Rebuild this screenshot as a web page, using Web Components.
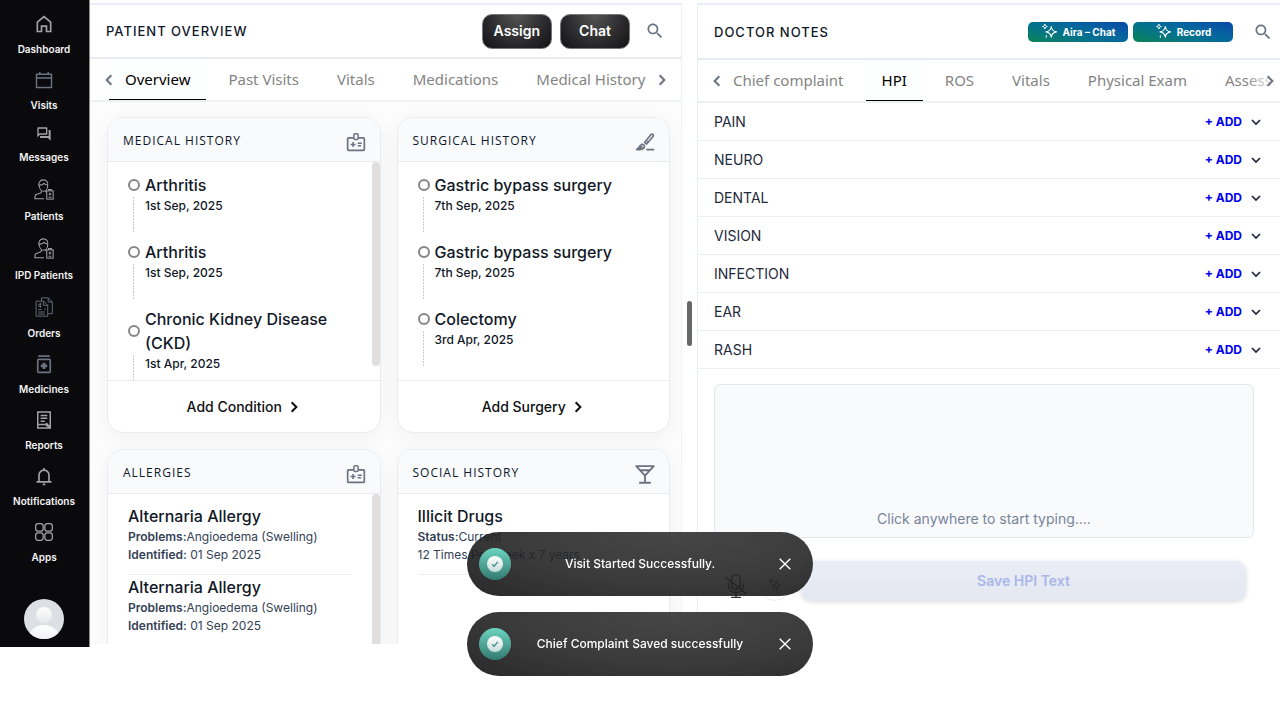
<!DOCTYPE html>
<html lang="en">
<head>
<meta charset="utf-8">
<title>Patient Overview</title>
<style>
body { margin: 0; background: #fff; color: #0f172a; font-family: Inter, "Noto Sans", sans-serif; }
</style>
</head>
<body>
<clinic-app></clinic-app>
<script>
const define = (name, css, html) => {
  const template = document.createElement('template');
  template.innerHTML = `<style>*{box-sizing:border-box}button{font-family:inherit;cursor:pointer;margin:0}${css}</style>${typeof html === 'string' ? html : ''}`;
  customElements.define(name, class extends HTMLElement {
    constructor() {
      super();
      this.attachShadow({ mode: 'open' }).append(template.content.cloneNode(true));
    }
    connectedCallback() {
      if (typeof html === 'function' && !this.ready) {
        this.ready = true;
        this.shadowRoot.innerHTML += html(this);
      }
    }
  });
};

const person = '<g stroke-width="1.1"><path d="M6.5 8.5C5.5 4.5 8 1.5 11 1.5c3.500 0 6 2 5 7"/><path d="M7 6.500c1.500.8 3.500.5 5-1.200 1 1.200 2.500 1.800 4 1.800M7 8c0 3.500 2 6 4.500 6S16 11.500 16 8"/><path d="M9 13.500v2l-5.500 2C2.300 18 2 19 2 22h10M13.500 13.500l1 1.500"/><rect x="15" y="13.500" width="7" height="9"/><path d="M17 13.500v-1.500h3v1.500M17 20.500h3M18.500 15.500v3M17 17h3"/></g>';
const icons = {
  home: '<path d="M4 9.700 12 3l8 6.700V21h-5v-6.500H9V21H4z" stroke-width="2"/>',
  calendar: '<path d="M3 5h18v16H3zM3 9.500h18M7 2.500V5M17 2.500V5" stroke-width="1.700"/>',
  messages: '<path fill="currentColor" stroke="none" d="M15 4v7H5.170L4 12.170V4h11m1-2H3c-.55 0-1 .45-1 1v14l4-4h10c.55 0 1-.45 1-1V3c0-.55-.45-1-1-1zm5 4h-2v9H6v2c0 .55.45 1 1 1h11l4 4V7c0-.55-.45-1-1-1z"/>',
  person,
  orders: '<g stroke-width="1.100"><path d="M9 5V1h8l5 5v14h-5M17 1v5h5"/><path d="M2.500 5h9l5 5v13h-14zM11.500 5v5h5M5 15h4M5 18h8M5 20.500h8M12 14.500h2"/><path d="M9 8.500H7a1.500 1.500 0 0 0 0 3h2M7.500 7v6"/></g>',
  medicine: '<path d="M5 2.500h14" stroke-width="2"/><rect x="4.500" y="6.500" width="15" height="15.500" rx="1" stroke-width="2"/><path d="M12 10.500v7.500M8.200 14.200h7.600" stroke-width="3.200"/>',
  report: '<path d="M4.500 2.500h15v19h-15zM4.500 17.500H14l5 4M8 6.500h8M8 10h8M8 13.500h5M14.500 15.500l5 5.500" stroke-width="1.800"/>',
  bell: '<path d="M3 19h18M6 19v-8a6 6 0 0 1 12 0v8M12 5V2.500M10.500 22h3" stroke-width="2"/>',
  apps: '<g stroke-width="1.500"><rect x="2" y="2" width="9" height="9" rx="3"/><rect x="13" y="2" width="9" height="9" rx="3"/><rect x="2" y="13" width="9" height="9" rx="3"/><rect x="13" y="13" width="9" height="9" rx="3"/></g>',
  search: '<path fill="currentColor" stroke="none" d="M15.500 14h-.79l-.28-.27C15.410 12.590 16 11.110 16 9.500 16 5.910 13.090 3 9.500 3S3 5.910 3 9.500 5.910 16 9.500 16c1.610 0 3.090-.59 4.230-1.570l.27.28v.79l5 4.990L20.490 19l-4.990-5zm-6 0C7.010 14 5 11.990 5 9.500S7.010 5 9.500 5 14 7.010 14 9.500 11.990 14 9.500 14z"/>',
  left: '<path d="M16 4 8 12l8 8" stroke-width="3.500"/>',
  right: '<path d="m8 4 8 8-8 8" stroke-width="3.500"/>',
  down: '<path d="m4 8 8 8 8-8" stroke-width="3.500"/>',
  badge: '<path d="M9.500 7H3a1 1 0 0 0-1 1v13a1 1 0 0 0 1 1h18a1 1 0 0 0 1-1V8a1 1 0 0 0-1-1h-6.500" stroke-width="2"/><rect x="9.500" y="2" width="5" height="7" rx="1.500" stroke-width="1.800"/><path d="M8.500 12v6M5.500 15h6M14 13.500h5M14 16.500h4" stroke-width="1.900"/>',
  scalpel: '<path d="M11.500 12.500 19 3.200a1.700 1.700 0 0 1 2.600 2.200L14 14.500zM2 21c4 .5 8 0 9-2.500 1-2-1-4.500-3-3.500-3 1.500-2.500 4-6 6zM4 20.500l5-3M14 10l2.500 2.200M13.500 21.200H23" stroke-width="2" stroke-linejoin="round"/>',
  glass: '<path d="M1.500 2.500h21L12 14zM12 14v8M5 22.500h14M6 7.500h12" stroke-width="2.200" stroke-linejoin="round"/>',
  sparkles: '<path d="M14.500 5c.7 5 2.500 7 7.500 7.500-5 .7-6.800 2.500-7.500 7.500-.7-5-2.500-6.800-7.500-7.500 5-.5 6.800-2.500 7.500-7.500z" stroke-width="1.500" stroke-linejoin="round"/><path d="M5.500 1.500c.3 2.300 1 3 3.500 3.500-2.500.4-3.200 1.200-3.500 3.500C5.200 6.200 4.500 5.400 2 5c2.500-.5 3.200-1.200 3.500-3.500zM7.500 17v4" stroke-width="1.300"/>',
  mic: '<g stroke-width="1.300"><path d="M8 7V5.500a4 4 0 0 1 8 0V11a4 4 0 0 1-8 0V7M5 9v2c0 4.500 3 7 7 7s7-2.500 7-7V9M12 18v4M7.500 22.500h9M2 3.500l20 16"/></g>',
  close: '<path d="m4 4 16 16M20 4 4 20" stroke-width="2.200"/>',
  check: '<path d="m5 13 4.500 4.500L19 7" stroke-width="3"/>'
};

define('ui-icon', `:host{display:inline-flex;width:20px;height:20px;flex:none}svg{width:100%;height:100%}`,
  el => `<svg viewBox="0 0 24 24" fill="none" stroke="currentColor" aria-hidden="true">${icons[el.getAttribute('name')]}</svg>`);

define('nav-item', `
  :host{display:block}
  a{display:flex;flex-direction:column;align-items:center;gap:8px;padding-bottom:14px;color:#f4f4f5;text-decoration:none;font-size:10px;line-height:14px;font-weight:600;white-space:nowrap}
  ::slotted(ui-icon){color:#a3a3a3}`,
  `<a href="#"><slot name="icon"></slot><slot></slot></a>`);

define('side-bar', `
  :host{display:flex;flex-direction:column;box-sizing:border-box;width:90px;flex:none;background:#0a0a0c;border-right:1px solid #8a8a8a;padding:14px 1px 8px 0}
  nav{display:block}
  .short{height:16px}.tall{height:23px;width:22px}.doc{height:22px}
  .slate{color:#6b7280}
  .avatar{margin:auto auto 0;width:40px;height:40px;padding:0;border:0;border-radius:50%;overflow:hidden;background:#dedfe5;flex:none}
  .avatar svg{display:block}`,
  `<nav aria-label="Main">${[
    ['home', 'Dashboard', ''], ['calendar', 'Visits', 'slate'], ['messages', 'Messages', 'short'],
    ['person', 'Patients', 'tall'], ['person', 'IPD Patients', 'tall'], ['orders', 'Orders', 'doc slate'],
    ['medicine', 'Medicines', 'slate'], ['report', 'Reports', ''], ['bell', 'Notifications', ''], ['apps', 'Apps', '']
  ].map(([i, t, c]) => `<nav-item><ui-icon slot="icon" class="${c}" name="${i}"></ui-icon>${t}</nav-item>`).join('')}</nav>
  <button class="avatar" aria-label="Profile"><svg viewBox="0 0 40 40"><defs><linearGradient id="g" x2="0" y2="1"><stop stop-color="#fff"/><stop offset="1" stop-color="#e6e7ea"/></linearGradient></defs><circle cx="20" cy="16" r="8" fill="url(#g)"/><ellipse cx="20" cy="38" rx="15" ry="12" fill="url(#g)"/></svg></button>`);

define('panel-header', `
  :host{display:flex;align-items:center;box-sizing:border-box;height:56px;flex:none;padding-left:16px;padding-right:var(--header-end,16px);border-top:2px solid #e9eef4;border-bottom:2px solid #e6ebf2}
  h1{margin:0 auto 0 0;font-size:13px;line-height:16px;font-weight:500;letter-spacing:1px;white-space:nowrap}
  .tools{display:flex;align-items:center;gap:var(--tool-gap,8px)}
  .search{border:0;background:none;padding:0;display:flex;color:#6b7280;margin-left:var(--search-gap,16px)}`,
  `<h1><slot></slot></h1><div class="tools"><slot name="tools"></slot></div>
   <button class="search" aria-label="Search"><ui-icon name="search"></ui-icon></button>`);

define('dark-button', `
  :host{display:block}
  button{height:35px;min-width:70px;padding:0 11px;border:1px solid #777;border-radius:10px;color:#fff;font-size:14px;line-height:20px;font-weight:600;background:radial-gradient(ellipse at 50% 0,#555 0,#2d2d2f 55%,#111114 100%) border-box}`,
  `<button><slot></slot></button>`);

define('ai-button', `
  :host{display:block}
  button{display:flex;align-items:center;justify-content:center;gap:5px;width:100px;height:20px;padding:0;border:0;border-radius:5px;color:#fff;font-size:10px;line-height:16px;font-weight:700;background:linear-gradient(15deg,#0b8457 0,#04728c 40%,#0565a0 65%,#0b47a8 100%)}
  ui-icon{width:17px;height:17px}`,
  `<button><ui-icon name="sparkles"></ui-icon><slot></slot></button>`);

define('tab-strip', `
  :host{display:block;position:relative;box-sizing:border-box;height:43px;flex:none;padding:0 var(--strip-end,30px) 0 19px;border-bottom:2px solid #eef1f4}
  .tabs{display:flex;gap:6px;height:100%;overflow:hidden}
  .tab{flex:none;border:0;border-bottom:1px solid transparent;background:none;padding:0 16px;color:#848484;font:400 15px/24px "Noto Sans",sans-serif;white-space:nowrap}
  .tab[aria-selected=true]{color:#000;border-bottom-color:#000;background:#fdfefe}
  .arrow{position:absolute;top:14px;border:0;padding:0;background:none;display:flex;color:#6b7280}
  .arrow ui-icon{width:14px;height:14px}
  .prev{left:12px}.next{right:var(--next-inset,12px)}
  .fade{position:absolute;top:0;bottom:0;right:0;width:var(--fade,36px);background:linear-gradient(90deg,#fff0,#fff 90%);pointer-events:none}`,
  el => `<div class="tabs" role="tablist">${el.getAttribute('labels').split('|').map(t =>
      `<button class="tab" role="tab" aria-selected="${t === el.getAttribute('selected')}">${t}</button>`).join('')}</div>
    <div class="fade"></div>
    <button class="arrow prev" aria-label="Previous tabs"><ui-icon name="left"></ui-icon></button>
    <button class="arrow next" aria-label="Next tabs"><ui-icon name="right"></ui-icon></button>`);

define('record-card', `
  :host{display:flex;flex-direction:column;box-sizing:border-box;height:316px;border:1px solid #e9ebee;border-radius:16px;background:#fff;overflow:hidden;box-shadow:0 6px 22px #0000000b}
  header{display:flex;align-items:center;justify-content:space-between;height:44px;flex:none;padding:0 14px 0 15px;background:#f8fafc;border-bottom:1px solid #e9ebee}
  h2{margin:2px 0 0;font:500 12px/18px "Open Sans",sans-serif;letter-spacing:1px;white-space:nowrap}
  header ui-icon{color:#6b7280;margin-top:4px}
  .body{display:flex;flex:1;min-height:0;overflow:hidden}
  .content{flex:1;min-width:0;padding:11px 20px 0}
  .thumb{width:8px;height:204px;border-radius:4px;background:#e0dfde;flex:none}
  :host([kind=list]) .content{padding-top:10px}
  :host([kind=list]) .thumb{height:100%}
  :host(:not([scroll])) .thumb{visibility:hidden}
  footer{height:52px;flex:none;border-top:1px solid #e9ebee;display:flex}
  footer button{flex:1;display:flex;align-items:center;justify-content:center;gap:5px;border:0;background:none;color:#0f1115;font-size:14px;line-height:20px;font-weight:500}
  footer ui-icon{width:14px;height:14px}`,
  el => `<header><h2>${el.getAttribute('heading')}</h2><ui-icon name="${el.getAttribute('icon')}"></ui-icon></header>
    <div class="body"><div class="content"><slot></slot></div><div class="thumb"></div></div>
    ${el.hasAttribute('action') ? `<footer><button>${el.getAttribute('action')} <ui-icon name="right"></ui-icon></button></footer>` : ''}`);

define('timeline-entry', `
  :host{display:grid;grid-template-columns:12px 1fr;column-gap:5px;grid-template-rows:auto 43px;color:#111827}
  .dot{align-self:center;width:12px;height:12px;border:2px solid #868686;border-radius:50%}
  h3{margin:0;font-size:16px;line-height:24px;font-weight:500}
  .line{width:7px;height:35px;border-right:0;background:repeating-linear-gradient(#ccc 0 2px,#fff 2px 3px) 5px 0/1px 100% no-repeat}
  time{font-size:12px;line-height:18px;font-weight:500}`,
  el => `<span class="dot"></span><h3><slot></slot></h3><span class="line"></span><time>${el.getAttribute('date')}</time>`);

define('detail-entry', `
  :host{display:block;padding-bottom:10px;border-bottom:1px solid #eeeff1;color:#334155;font-size:12px;line-height:18px}
  h3{margin:0;color:#111827;font-size:16px;line-height:24px;font-weight:500}`,
  el => `<h3>${el.getAttribute('heading')}</h3><slot></slot>`);

define('symptom-row', `
  :host{display:flex;align-items:center;box-sizing:border-box;height:38px;flex:none;padding:0 17px 0 16px;border-bottom:1px solid #eaeef3;color:#1e293b;font-size:14px;line-height:20px}
  span{margin-right:auto}
  button{border:0;background:none;padding:0}
  .add{color:#00e;font-size:12px;line-height:18px;font-weight:700}
  .more{display:flex;color:#1e293b;margin-left:7px}
  .more ui-icon{width:12px;height:12px;margin:0 1px}`,
  `<span><slot></slot></span><button class="add">+ ADD</button><button class="more" aria-label="Expand"><ui-icon name="down"></ui-icon></button>`);

define('patient-overview', `
  :host{display:flex;flex-direction:column;min-width:0;min-height:0;border-right:1px solid #eef1f5;margin:3px 0;--header-end:16px;--search-gap:15px}
  .cards{flex:1;min-height:0;overflow:hidden;display:grid;grid-template-columns:1fr 1fr;gap:16px;align-content:start;padding:15px 11px 0 17px;background:#fcfcfc}
  b{font-weight:600}`,
  `<panel-header>PATIENT OVERVIEW<dark-button slot="tools">Assign</dark-button><dark-button slot="tools">Chat</dark-button></panel-header>
  <tab-strip labels="Overview|Past Visits|Vitals|Medications|Medical History" selected="Overview"></tab-strip>
  <div class="cards">
    <record-card heading="MEDICAL HISTORY" icon="badge" action="Add Condition" scroll>
      <timeline-entry date="1st Sep, 2025">Arthritis</timeline-entry>
      <timeline-entry date="1st Sep, 2025">Arthritis</timeline-entry>
      <timeline-entry date="1st Apr, 2025">Chronic Kidney Disease (CKD)</timeline-entry>
    </record-card>
    <record-card heading="SURGICAL HISTORY" icon="scalpel" action="Add Surgery">
      <timeline-entry date="7th Sep, 2025">Gastric bypass surgery</timeline-entry>
      <timeline-entry date="7th Sep, 2025">Gastric bypass surgery</timeline-entry>
      <timeline-entry date="3rd Apr, 2025">Colectomy</timeline-entry>
    </record-card>
    <record-card heading="ALLERGIES" icon="badge" kind="list" scroll>
      <detail-entry heading="Alternaria Allergy"><b>Problems:</b>Angioedema (Swelling)<br><b>Identified:</b> 01 Sep 2025</detail-entry>
      <detail-entry heading="Alternaria Allergy"><b>Problems:</b>Angioedema (Swelling)<br><b>Identified:</b> 01 Sep 2025</detail-entry>
    </record-card>
    <record-card heading="SOCIAL HISTORY" icon="glass" kind="list">
      <detail-entry heading="Illicit Drugs"><b>Status:</b>Current<br>12 Times Per Week x 7 years</detail-entry>
    </record-card>
  </div>`);

define('doctor-notes', `
  :host{display:flex;flex-direction:column;min-width:0;min-height:0;margin:3px 0 0;border-left:1px solid #e9eef4;--tool-gap:5px;--search-gap:20px;--header-end:7px;--strip-end:0px;--next-inset:3px;--fade:34px}
  panel-header{height:57px}
  form{padding:15px 26px 0 16px}
  textarea{display:block;width:100%;height:154px;padding:124px 16px 8px;border:1px solid #e2e8f0;border-radius:6px;background:#f8fafc;font:400 14px/20px Inter,sans-serif;text-align:center;resize:none;overflow:hidden}
  textarea::placeholder{color:#78849a;opacity:1}
  .actions{display:flex;align-items:end;gap:10px;padding:23px 8px 0 9px}
  .actions button{border:0;background:none;padding:0;color:#333}
  .actions .mic{width:26px;height:30px;display:flex}
  .mic ui-icon{width:26px;height:30px}
  .actions .ai{width:32px;height:32px;border:1px solid #eee;border-radius:50%;display:flex;align-items:center;justify-content:center;background:#fff}
  .ai ui-icon{width:14px;height:14px}
  .actions .save{flex:1;height:40px;border-radius:10px;background:linear-gradient(#eaedf6,#e4e8f1);color:#a8b8ea;font-size:14px;line-height:20px;font-weight:600;box-shadow:0 1px 4px #00000026}`,
  `<panel-header>DOCTOR NOTES<ai-button slot="tools">Aira – Chat</ai-button><ai-button slot="tools">Record</ai-button></panel-header>
  <tab-strip labels="Chief complaint|HPI|ROS|Vitals|Physical Exam|Assessment" selected="HPI"></tab-strip>
  ${['PAIN', 'NEURO', 'DENTAL', 'VISION', 'INFECTION', 'EAR', 'RASH'].map(t => `<symptom-row>${t}</symptom-row>`).join('')}
  <form>
    <textarea aria-label="HPI text" placeholder="Click anywhere to start typing...."></textarea>
    <div class="actions">
      <button type="button" class="mic" aria-label="Microphone off"><ui-icon name="mic"></ui-icon></button>
      <button type="button" class="ai" aria-label="Enhance text"><ui-icon name="sparkles"></ui-icon></button>
      <button type="button" class="save" disabled>Save HPI Text</button>
    </div>
  </form>`);

define('toast-message', `
  :host{display:grid;grid-template-columns:32px 1fr 32px;align-items:center;box-sizing:border-box;width:346px;max-width:100%;height:64px;padding:0 12px;border-radius:32px;color:#fff;font-size:12px;line-height:18px;font-weight:500;text-align:center;background:radial-gradient(ellipse at 60% 0,#2f2f2fe2 0,#242424e4 55%,#141414e8 100%)}
  .mark{width:32px;height:32px;border-radius:50%;display:grid;place-items:center;background:linear-gradient(#6dd3c0,#347a70)}
  .disc{width:16px;height:16px;border-radius:50%;display:grid;place-items:center;background:linear-gradient(#fff,#c5dcd8);color:#3f8b80}
  .disc ui-icon{width:10px;height:10px}
  button{width:32px;height:32px;padding:0;border:0;background:none;color:#fff;display:grid;place-items:center}
  button ui-icon{width:16px;height:16px}`,
  `<span class="mark"><span class="disc"><ui-icon name="check"></ui-icon></span></span><span role="status"><slot></slot></span><button aria-label="Dismiss"><ui-icon name="close"></ui-icon></button>`);

define('clinic-app', `
  :host{display:block}
  .app{display:flex;height:calc(100vh - 73px)}
  main{flex:1;min-width:0;min-height:0;display:grid;grid-template-columns:592fr 15px 583fr;grid-template-rows:minmax(0,1fr)}
  .splitter{display:grid;place-items:center}
  .grip{width:5px;height:45px;border-radius:3px;background:#666}
  .toasts{position:fixed;left:0;right:0;bottom:44px;display:flex;flex-direction:column;align-items:center;gap:16px;pointer-events:none}`,
  `<div class="app"><side-bar></side-bar><main><patient-overview></patient-overview>
   <div class="splitter" role="separator" aria-orientation="vertical"><span class="grip"></span></div><doctor-notes></doctor-notes></main></div>
   <div class="toasts"><toast-message>Visit Started Successfully.</toast-message><toast-message>Chief Complaint Saved successfully</toast-message></div>`);
</script>
</body>
</html>
